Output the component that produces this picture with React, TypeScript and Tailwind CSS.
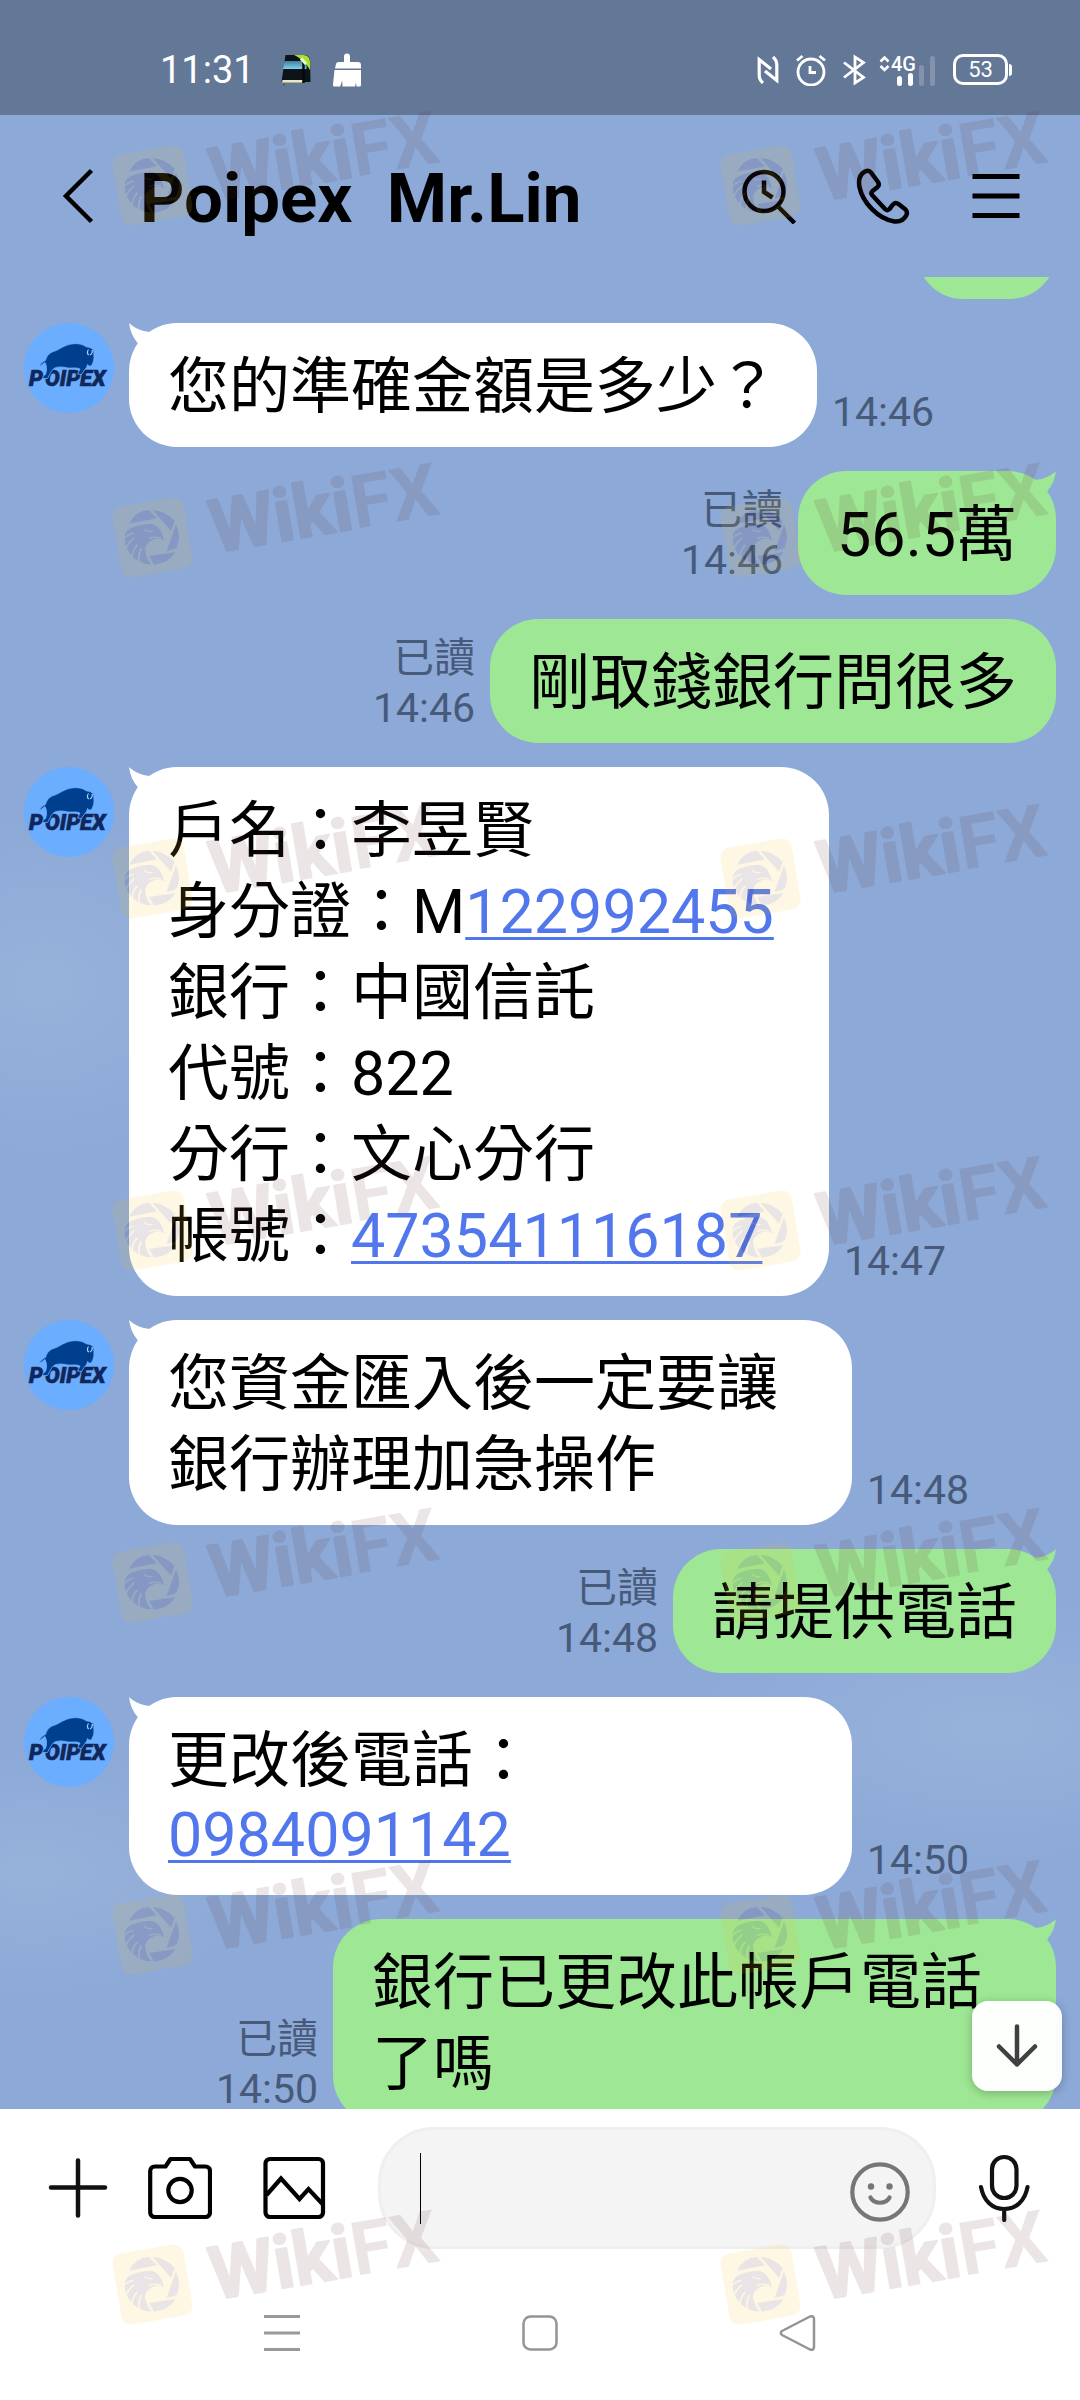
import type { ReactNode } from "react";

const FONT = "font-['Roboto','Noto_Sans_CJK_TC',sans-serif]";

/* ---------- status bar ---------- */

function StatusBar() {
  return (
    <div className="flex h-[115px] shrink-0 items-center justify-between bg-[#637797] pt-6 pr-[68px] pl-[160px] text-white">
      <div className="flex items-center">
        <span className="w-[120px] text-[38px] leading-[40px]">11:31</span>
        <svg className="h-8 w-8" viewBox="0 0 32 32" aria-hidden="true">
          <defs>
            <linearGradient id="band" x1="0" y1="0" x2="0" y2="1">
              <stop offset="0" stopColor="#3f7f9f" />
              <stop offset="1" stopColor="#7fd0ee" />
            </linearGradient>
          </defs>
          <path d="M5.500 1H26c3 1 4 3 4 6l.500 21H1.500z" fill="#0c1418" />
          <path d="M4.500 7h22v8H3z" fill="url(#band)" />
          <path d="M2.500 26h21v2.500H2z" fill="#f2e6c0" />
          <path d="M23.500 7v22" stroke="#05090b" strokeWidth="2.500" />
          <path d="M14 1h9c5 0 7 3 7 7v8c-4-7-9-12-16-15z" fill="#a6e22e" />
          <path d="M21 4.500l5 5.500" stroke="#e9fbc0" strokeWidth="3" />
          <path d="M4 29v3" stroke="#5d5d5d" strokeWidth="1.500" />
        </svg>
        <svg className="ml-5 h-[34px] w-[30px]" viewBox="0 0 30 34" fill="white" aria-hidden="true">
          <path d="M12 3.500a3 3 0 0 1 6 0V9h8a3 3 0 0 1 3 3v3.500H3L4 11a2.500 2.500 0 0 1 2.500-2H12z" />
          <path d="M2.500 17H29v15a1.500 1.500 0 0 1-1.500 1.500h-3l-.500-4-1 4H10.500l-.300-6-2 6H2.500A1.500 1.500 0 0 1 1 31.500z" />
        </svg>
      </div>
      <div className="flex items-center">
        <svg className="h-8 w-[22px]" viewBox="0 0 22 32" fill="none" stroke="white" strokeWidth="3.200" aria-hidden="true">
          <path d="M6 29C3 26.500 2.200 24 2.200 21V5.500L14 15" />
          <path d="M16 3c3 2.500 3.800 5 3.800 8v15.500L8 17" />
        </svg>
        <svg className="ml-4 h-8 w-8" viewBox="0 0 32 32" fill="none" stroke="white" strokeWidth="2.800" aria-hidden="true">
          <circle cx="16" cy="18" r="13" />
          <path d="M15 12v6.500h6M2 6.500L7.500 2M30 6.500L24.500 2" />
        </svg>
        <svg className="ml-4 h-8 w-6" viewBox="0 0 24 32" fill="none" stroke="white" strokeWidth="2.800" aria-hidden="true">
          <path d="M1 8.500L20.500 23.500 12 29V3l8.500 5.500L1 23.500" />
        </svg>
        <div className="relative ml-3 h-8 w-[58px]">
          <svg className="h-8 w-[58px]" viewBox="0 0 58 32" fill="none" stroke="white" aria-hidden="true">
            <path d="M1.500 7.500L5.500 3.500l4 4M1.500 12l4 4 4-4" strokeWidth="2.600" />
            <path d="M20.500 24.500v5M31.500 21.500v8" strokeWidth="5" strokeLinecap="round" />
            <path d="M42.500 13.500v16M53.500 4.500v25" stroke="#8493ab" strokeWidth="5" strokeLinecap="round" />
          </svg>
          <span className="absolute top-0 left-3 text-xl leading-[20px] font-medium">4G</span>
        </div>
        <div className="ml-4 flex items-center">
          <span className="flex h-[31px] w-[55px] items-center justify-center rounded-[10px] border-3 border-white text-[22px] leading-[24px]">53</span>
          <span className="ml-px h-3 w-[3px] rounded-r-sm bg-white" />
        </div>
      </div>
    </div>
  );
}

/* ---------- chat header ---------- */

function Header() {
  return (
    <header className="flex h-[162px] shrink-0 items-center justify-between pr-14 pl-[60px] text-black">
      <div className="flex items-center">
        <button type="button" aria-label="Back" className="w-9">
          <svg className="h-[60px] w-9" viewBox="0 0 36 60" fill="none" stroke="currentColor" strokeWidth="4.500">
            <path d="M31.500 4.500L6 30l25.500 25.500" />
          </svg>
        </button>
        <h1 className="mt-1.5 ml-11 text-[69px] leading-[80px] font-bold whitespace-pre">Poipex  Mr.Lin</h1>
      </div>
      <div className="flex items-center gap-[57px]">
        <button type="button" aria-label="Search" className="w-14">
          <svg className="h-14 w-14" viewBox="0 0 56 56" fill="none" stroke="currentColor" strokeWidth="4.500">
            <circle cx="22" cy="23.500" r="19.500" />
            <path d="M36 38.500l16.500 16.500M22 12.500v11.500l8.500 5.500" />
          </svg>
        </button>
        <button type="button" aria-label="Call" className="w-14">
          <svg className="h-14 w-14" viewBox="0 0 56 56" fill="none" stroke="currentColor" strokeWidth="4.500" strokeLinejoin="round">
            <path d="M10 3.500C5.500 6 3 11 4.500 19c3 15 18 32 35 34.500 6 .500 10-2.500 12-6.500 1-2.500.500-4-1-5.500l-7-5.500c-2-1.500-4-1.500-5.500.500l-3.500 4.500c-1.500 1.500-3 1.500-4.500 0L17.500 27.500c-1.500-1.500-1.500-3 0-4.500l4.500-3.500c2-1.500 2.500-3 1-5.500L16 4.500c-1.500-2-4-2-6-1z" />
          </svg>
        </button>
        <button type="button" aria-label="Menu" className="w-14">
          <svg className="h-14 w-14" viewBox="0 0 56 56" stroke="currentColor" strokeWidth="5">
            <path d="M4.500 8.500h47M4.500 28h47M4.500 47.500h47" />
          </svg>
        </button>
      </div>
    </header>
  );
}

/* ---------- messages ---------- */

function Avatar() {
  return (
    <svg className="h-[90px] w-[90px] shrink-0" viewBox="0 0 90 90" role="img" aria-label="Poipex">
      <circle cx="45" cy="45" r="45" fill="#6badff" />
      <text y="63" fontFamily="Roboto" fontSize="22" fontWeight="900" fontStyle="italic" fill="#10275c" stroke="#10275c" strokeWidth=".6">
        <tspan x="5">P</tspan>
        <tspan x="21">OIPEX</tspan>
      </text>
      <path
        d="M15 43.500C17 40 19 38.500 21.500 37.500 23 32 26 29.500 31 28c4-1.500 6-3.500 10-5 5-2.500 12-3 17-1.500 2 .800 3.500 2 5 2.500 3 0 5 1.500 6.500 3 .800 3 0 5 .500 7 0 3-1 6-2.500 8.500-1 1-3 .500-4-1-.500 2.500-1.500 4-3 5.500L57.500 51.500l-4-.500 2.500-5c-4-2-8-.500-12-1-4-1-8-1.500-12-.500-3 1-4 3-5.500 5.500L23.500 55.500h-5c0-2 1.500-3 3-4 1-3 1.500-6 .500-9.500l-1-2.500c-2 .500-3 3-6 4z"
        fill="#003f8e"
        stroke="#6badff"
        strokeWidth=".8"
      />
      <path d="M64.500 26.500c-1.500 2-1.500 4.500.300 5.500M68 27c.800 2.500-.300 4-2 5" fill="none" stroke="#a9d0ff" strokeWidth="1.200" />
    </svg>
  );
}

function Received({ time, wide = "", children }: { time: string; wide?: string; children: ReactNode }) {
  return (
    <div className="flex items-start pl-6">
      <Avatar />
      <div className="ml-[15px] flex items-end">
        <div className={`relative rounded-[48px] bg-white px-[39px] pt-6 pb-[19px] text-[61px] leading-[81px] ${wide}`}>
          <svg className="absolute top-0 left-0 h-6 w-6" viewBox="0 0 24 24" aria-hidden="true">
            <path d="M0 0c6 6 14 8.500 22 9l2 15H12L9 20.500C4 15 1 8 0 0z" fill="#ffffff" />
          </svg>
          {children}
        </div>
        <span className="mb-2.5 ml-[15px] text-[41px] leading-[50px] text-[#475a79]">{time}</span>
      </div>
    </div>
  );
}

function Sent({ time, wide = "", tail = true, children }: { time: string; wide?: string; tail?: boolean; children: ReactNode }) {
  return (
    <div className="flex items-end justify-end pr-6">
      <div className="mr-[15px] mb-2.5 flex flex-col items-end text-[41px] leading-[50px] text-[#475a79]">
        <span>已讀</span>
        <span>{time}</span>
      </div>
      <div className={`relative rounded-[48px] bg-[#9ee794] px-[39px] pt-6 pb-[19px] text-[61px] leading-[81px] ${wide}`}>
        {tail && (
          <svg className="absolute top-0 right-0 h-6 w-6" viewBox="0 0 24 24" aria-hidden="true">
            <path d="M24 0c-6 6-14 8.500-22 9L0 24h12l3-3.500C20 15 23 8 24 0z" fill="#9ee794" />
          </svg>
        )}
        {children}
      </div>
    </div>
  );
}

function PhoneLink({ value }: { value: string }) {
  return (
    <a href={`tel:${value}`} className="text-[#5277ed] underline decoration-3 underline-offset-4">
      {value}
    </a>
  );
}

function Chat() {
  return (
    <main className="relative min-h-0 flex-1 overflow-hidden">
      <div className="flex flex-col gap-6 text-black">
        <div className="flex h-[22px] items-end justify-end overflow-hidden pr-6">
          <div className="h-[124px] w-[139px] shrink-0 rounded-[46px] bg-[#9ee794]" />
        </div>
        <Received time="14:46">您的準確金額是多少？</Received>
        <Sent time="14:46">56.5萬</Sent>
        <Sent time="14:46" tail={false}>剛取錢銀行問很多</Sent>
        <Received time="14:47" wide="min-w-[700px]">
          <p>戶名：李昱賢</p>
          <p>身分證：M<PhoneLink value="122992455" /></p>
          <p>銀行：中國信託</p>
          <p>代號：822</p>
          <p>分行：文心分行</p>
          <p>帳號：<PhoneLink value="473541116187" /></p>
        </Received>
        <Received time="14:48" wide="w-[723px]">您資金匯入後一定要讓銀行辦理加急操作</Received>
        <Sent time="14:48">請提供電話</Sent>
        <Received time="14:50" wide="w-[723px]">
          <p>更改後電話：</p>
          <p className="pb-2 leading-[66px]"><PhoneLink value="0984091142" /></p>
        </Received>
        <Sent time="14:50" wide="w-[723px]">銀行已更改此帳戶電話了嗎</Sent>
      </div>
      <button
        type="button"
        aria-label="Scroll to latest"
        className="absolute right-[18px] bottom-[18px] flex h-[90px] w-[90px] items-center justify-center rounded-2xl bg-white/97 shadow-[0_2px_10px_rgba(0,0,0,0.25)]"
      >
        <svg className="h-11 w-11" viewBox="0 0 44 44" fill="none" stroke="#404040" strokeWidth="4.500" strokeLinecap="round" strokeLinejoin="round">
          <path d="M22 2.500v38M4 22.500l18 18 18-18" />
        </svg>
      </button>
    </main>
  );
}

/* ---------- composer and system navigation ---------- */

function Composer() {
  return (
    <form className="flex shrink-0 items-center bg-white pt-[18px] pr-11 pb-[17px] pl-[46px] text-black">
      <button type="button" aria-label="More" className="w-16">
        <svg className="h-16 w-16" viewBox="0 0 64 64" fill="none" stroke="#111" strokeWidth="4.500" strokeLinecap="round">
          <path d="M32 4.500v55M5 31.500h54" />
        </svg>
      </button>
      <button type="button" aria-label="Camera" className="ml-[38px] w-16">
        <svg className="h-16 w-16" viewBox="0 0 64 64" fill="none" stroke="currentColor" strokeWidth="4.200" strokeLinejoin="round">
          <path d="M2.200 15a4.500 4.500 0 0 1 4.500-4.500H17.500l5-7.500h19.500l5 7.500H57.500a4.500 4.500 0 0 1 4.500 4.500v41.500a4.500 4.500 0 0 1-4.500 4.500H6.700a4.500 4.500 0 0 1-4.500-4.500z" />
          <circle cx="32" cy="34.500" r="11.700" />
        </svg>
      </button>
      <button type="button" aria-label="Photo" className="ml-[50px] w-16">
        <svg className="h-16 w-16" viewBox="0 0 64 64" fill="none" stroke="currentColor" strokeWidth="4.200">
          <rect x="3.500" y="3" width="57.500" height="58" rx="4.500" />
          <path d="M4.500 39L19 22.500l18.500 20.500L46.500 33l14 15" />
        </svg>
      </button>
      <div className="ml-[52px] flex h-[122px] min-w-0 flex-1 items-center rounded-[56px] border-3 border-[#efefef] bg-[#f4f4f4] pr-[23px] pl-[39px]">
        <span className="h-[71px] w-px shrink-0 bg-black" />
        <input type="text" aria-label="Message" className="h-20 min-w-0 flex-1 bg-transparent text-[61px] outline-none" />
        <button type="button" aria-label="Emoji" className="mt-2 w-[60px]">
          <svg className="h-[60px] w-[60px]" viewBox="0 0 60 60" fill="none" stroke="#767676" strokeWidth="4.200" strokeLinecap="round">
            <circle cx="30" cy="30" r="27.700" />
            <path d="M20.500 35.500c3.500 7 15.500 7 19 0" />
            <circle cx="21" cy="24.500" r="3.200" fill="#767676" stroke="none" />
            <circle cx="39.500" cy="24.500" r="3.200" fill="#767676" stroke="none" />
          </svg>
        </button>
      </div>
      <button type="button" aria-label="Voice message" className="ml-9 w-16">
        <svg className="h-[68px] w-16" viewBox="0 0 64 68" fill="none" stroke="#111" strokeWidth="4.200" strokeLinecap="round">
          <rect x="20" y="3" width="24.500" height="41" rx="12.200" />
          <path d="M9 33c2.500 14 11.500 22 23.200 22S53 47 55.500 33M32.200 55v11" />
        </svg>
      </button>
    </form>
  );
}

function SystemNav() {
  return (
    <nav className="flex h-[134px] shrink-0 items-center justify-center gap-[218px] bg-white">
      <button type="button" aria-label="Recent apps" className="w-10">
        <svg className="h-10 w-10" viewBox="0 0 40 40" stroke="#999" strokeWidth="3">
          <path d="M2 3.500h36M2 20h36M2 36.500h36" />
        </svg>
      </button>
      <button type="button" aria-label="Home" className="w-10">
        <svg className="h-10 w-10" viewBox="0 0 40 40" fill="none" stroke="#949494" strokeWidth="2.500">
          <rect x="3.500" y="3.500" width="33" height="33" rx="7" />
        </svg>
      </button>
      <button type="button" aria-label="Back" className="w-10">
        <svg className="h-10 w-10" viewBox="0 0 40 40" fill="none" stroke="#949494" strokeWidth="2.500" strokeLinejoin="round">
          <path d="M4 18L32 3.500c2.500-1 4 .500 4 2.500v28c0 2-1.500 3.500-4 2.500L4 22c-1.500-1-1.500-3 0-4z" />
        </svg>
      </button>
    </nav>
  );
}

/* ---------- watermark ---------- */

function Watermark({ className }: { className: string }) {
  return (
    <svg className={`absolute h-[124px] w-[340px] overflow-visible ${className}`} viewBox="0 0 340 124" aria-hidden="true">
      <g opacity="0.12">
        <rect x="8.500" y="40.500" width="72" height="72" rx="10" transform="rotate(-9.700 44.500 76.500)" fill="#f0c028" />
        <g transform="matrix(0.3444 0 0 0.3333 -108 -160)" fill="#50283c">
          <path d="M375 668Q394 629 432 627L455 652z" />
          <path d="M443 627Q482 630 507 660L497 689z" />
          <path d="M511 670Q528 708 512 742L484 750z" />
          <path d="M510 753Q488 788 447 791L433 765z" />
          <path d="M370 688Q392 670 438 668Q468 674 476 718Q460 708 444 716Q418 728 422 752Q426 775 439 790Q400 790 376 756Q358 728 363 702z" />
          <g fill="none" stroke="#f0c028" strokeLinecap="round">
            <path d="M362 710Q374 700 386 697M366 742Q374 722 388 712M384 768Q384 746 398 733M404 784Q400 762 410 744" strokeWidth="5" />
            <path d="M419 686Q427 694 441 691M434 712Q448 706 466 711" strokeWidth="4" />
          </g>
        </g>
        <g transform="rotate(-9.700 106 91)" fontFamily="Roboto" fontWeight="700" fontSize="74">
          <text x="106" y="92" fill="#643232">
            <tspan stroke="#643232" strokeWidth="2" strokeLinejoin="round">Wiki</tspan>
            <tspan>FX</tspan>
          </text>
        </g>
      </g>
    </svg>
  );
}

const WATERMARK_ROWS = ["top-[109px]", "top-[461px]", "top-[802px]", "top-[1154px]", "top-[1506px]", "top-[1858px]", "top-[2208px]"];

function Watermarks() {
  return (
    <div className="pointer-events-none absolute inset-0 overflow-hidden">
      {WATERMARK_ROWS.map((row) => (
        <div key={row}>
          <Watermark className={`left-[108px] ${row}`} />
          <Watermark className={`left-[716px] ${row}`} />
        </div>
      ))}
    </div>
  );
}

export default function App() {
  return (
    <div
      lang="zh-TW"
      className={`relative flex h-screen flex-col overflow-hidden bg-[#8ca9d7] bg-[radial-gradient(ellipse_200px_170px_at_4%_41%,rgba(156,182,220,0.7),transparent),radial-gradient(ellipse_300px_130px_at_92%_72%,rgba(156,182,220,0.7),transparent),radial-gradient(ellipse_240px_120px_at_3%_78%,rgba(156,182,220,0.7),transparent)] ${FONT}`}
    >
      <StatusBar />
      <Header />
      <Chat />
      <Composer />
      <SystemNav />
      <Watermarks />
    </div>
  );
}
